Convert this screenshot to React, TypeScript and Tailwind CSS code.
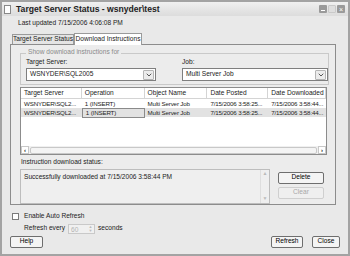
import { ChevronDown } from 'lucide-react';

const rows = [
  { server: 'WSNYDER\\SQL2...', op: '1 (INSERT)', obj: 'Multi Server Job', posted: '7/15/2006 3:58:25...', down: '7/15/2006 3:58:44...' },
  { server: 'WSNYDER\\SQL2...', op: '1 (INSERT)', obj: 'Multi Server Job', posted: '7/15/2006 3:58:25...', down: '7/15/2006 3:58:44...' },
];

const cols = [
  { label: 'Target Server', w: 'w-[61px]' },
  { label: 'Operation', w: 'w-[63px]' },
  { label: 'Object Name', w: 'w-[63px]' },
  { label: 'Date Posted', w: 'w-[61px]' },
  { label: 'Date Downloaded', w: 'w-[58px]' },
];

const Combo = ({ text, w }: { text: string; w: string }) => (
  <div className={`${w} flex h-[13px] items-center border border-[#7f7f7f] bg-white`}>
    <span className="flex-1 pl-[3px] leading-none">{text}</span>
    <div className="mr-[1px] flex h-[10px] w-[11px] items-center justify-center rounded-[1px] border border-[#b5b5b5] bg-[#ececec]">
      <ChevronDown size={8} strokeWidth={3} className="text-[#555]" />
    </div>
  </div>
);

const Button = ({ text, w, disabled }: { text: string; w: string; disabled?: boolean }) => (
  <div
    className={`${w} flex h-[12px] items-center justify-center rounded-[2px] border ${
      disabled ? 'border-[#cfcfcf] bg-[#efefef] text-[#a8a8a8]' : 'border-[#6e6e6e] bg-[#f4f4f4] text-black'
    } leading-none`}
  >
    {text}
  </div>
);

const Cell = ({ w, text, focus }: { w: string; text: string; focus?: boolean }) => (
  <div
    className={`${w} pl-[3px] text-[6.2px] leading-none tracking-[-0.15px] ${
      focus ? 'border border-[#8a8a8a] py-[1px]' : ''
    }`}
  >
    {text}
  </div>
);

const App = () => {
  return (
    <div
      className="flex h-[256px] w-[350px] flex-col overflow-hidden whitespace-nowrap border-[2px] border-[#a3a3a3] bg-[#e9e9e9] text-[6.6px] text-[#222]"
      style={{ fontFamily: '"Liberation Sans", Arial, sans-serif' }}
    >
      {/* title bar */}
      <div className="flex h-[14px] items-center bg-gradient-to-b from-[#f0f0f0] to-[#dcdcdc] pl-[2px] pr-[3px]">
        <div className="h-[9px] w-[7px] border border-[#888] bg-white" />
        <span className="ml-[5px] flex-1 text-[8.6px] font-bold leading-none text-[#222]">
          Target Server Status - wsnyder\test
        </span>
        <div className="flex gap-[1px]">
          <div className="flex h-[8px] w-[8px] items-end justify-center rounded-[1px] bg-[#9a9a9a] pb-[2px]">
            <div className="h-[1px] w-[4px] bg-white" />
          </div>
          <div className="h-[8px] w-[8px] rounded-[1px] border border-[#c9c9c9] bg-[#dedede]" />
          <div className="flex h-[8px] w-[8px] items-center justify-center rounded-[1px] bg-[#9a9a9a] text-[7px] leading-none text-white">
            ×
          </div>
        </div>
      </div>

      <div className="flex flex-1 flex-col px-[8px]">
        <div className="mt-[4px] pl-[8px] leading-none">Last updated 7/15/2006 4:06:08 PM</div>

        {/* tabs */}
        <div className="mt-[5px] flex items-end pl-[2px]">
          <div className="flex h-[10px] w-[62px] items-center justify-center border border-b-0 border-[#9a9a9a] bg-[#e4e4e4] leading-none">
            Target Server Status
          </div>
          <div className="relative top-[1px] flex h-[12px] w-[68px] items-center justify-center border border-b-0 border-[#9a9a9a] bg-white leading-none">
            Download Instructions
          </div>
        </div>

        {/* tab panel */}
        <div className="flex h-[161px] w-[326px] flex-col border border-[#8c8c8c] bg-[#ececec] px-[9px]">
          {/* group */}
          <div className="relative mt-[8px] h-[34px] w-[309px] border border-[#c9c9c9] px-[5px]">
            <span className="absolute -top-[5px] left-[5px] bg-[#ececec] px-[2px] leading-none text-[#8a8a8a]">
              Show download instructions for
            </span>
            <div className="mt-[5px] flex gap-[26px]">
              <div className="flex flex-col gap-[3px]">
                <span className="leading-none">Target Server:</span>
                <Combo text="WSNYDER\SQL2005" w="w-[130px]" />
              </div>
              <div className="flex flex-col gap-[3px]">
                <span className="leading-none">Job:</span>
                <Combo text="Multi Server Job" w="w-[146px]" />
              </div>
            </div>
          </div>

          {/* list view */}
          <div className="mt-[2px] flex h-[70px] w-[307px] flex-col border border-[#8c8c8c] bg-white">
            <div className="flex h-[11px] border-b border-[#d4d4d4]">
              {cols.map((c, i) => (
                <div
                  key={i}
                  className={`${c.w} flex items-center border-r border-[#d4d4d4] pl-[3px] leading-none`}
                >
                  {c.label}
                </div>
              ))}
            </div>
            {rows.map((r, i) => (
              <div key={i} className={`flex h-[9px] items-center ${i === 1 ? 'bg-[#e2e2e2]' : ''}`}>
                <Cell w="w-[61px]" text={r.server} />
                <Cell w="w-[63px]" text={r.op} focus={i === 1} />
                <Cell w="w-[63px]" text={r.obj} />
                <Cell w="w-[61px]" text={r.posted} />
                <Cell w="w-[58px]" text={r.down} />
              </div>
            ))}
            <div className="flex-1" />
            {/* horizontal scrollbar */}
            <div className="flex h-[8px] items-center bg-[#f0f0f0]">
              <div className="flex h-[8px] w-[8px] items-center justify-center border border-[#c8c8c8] bg-white text-[6px] font-bold leading-none">
                ‹
              </div>
              <div className="mx-[1px] h-[7px] flex-1 rounded-[2px] border border-[#c8c8c8] bg-[#f4f4f4]" />
              <div className="flex h-[8px] w-[8px] items-center justify-center border border-[#c8c8c8] bg-white text-[6px] font-bold leading-none">
                ›
              </div>
            </div>
          </div>

          <div className="mt-[4px] pl-[1px] leading-none">Instruction download status:</div>

          <div className="mt-[3px] flex items-start gap-[8px]">
            <div className="flex h-[35px] w-[250px] border border-[#bdbdbd] bg-[#efefef]">
              <div className="flex-1 pl-[3px] pt-[4px] leading-none">
                Successfully downloaded at 7/15/2006 3:58:44 PM
              </div>
              <div className="flex w-[9px] flex-col justify-between border-l border-[#dedede] text-[5px] leading-none text-[#bbb]">
                <div className="flex h-[8px] items-center justify-center">▲</div>
                <div className="flex h-[8px] items-center justify-center">▼</div>
              </div>
            </div>
            <div className="mt-[3px] flex flex-col gap-[3px]">
              <Button text="Delete" w="w-[46px]" />
              <Button text="Clear" w="w-[46px]" disabled />
            </div>
          </div>
        </div>

        {/* bottom options */}
        <div className="mt-[8px] flex items-center gap-[5px] pl-[2px]">
          <div className="h-[7px] w-[7px] border border-[#7a7a7a] bg-white" />
          <span className="leading-none">Enable Auto Refresh</span>
        </div>
        <div className="mt-[4px] flex items-center gap-[3px] pl-[14px]">
          <span className="leading-none">Refresh every</span>
          <div className="flex h-[10px] w-[27px] border border-[#c9c9c9] bg-[#f0f0f0]">
            <span className="flex-1 pl-[2px] leading-[9px] text-[#b3b3b3]">60</span>
            <div className="flex w-[7px] flex-col justify-between text-[4px] leading-none text-[#bbb]">
              <span className="text-center">▲</span>
              <span className="text-center">▼</span>
            </div>
          </div>
          <span className="leading-none">seconds</span>
        </div>

        <div className="mt-[2px] flex items-center">
          <Button text="Help" w="w-[33px]" />
          <div className="flex-1" />
          <Button text="Refresh" w="w-[32px]" />
          <div className="w-[9px]" />
          <Button text="Close" w="w-[28px]" />
        </div>
      </div>
    </div>
  );
};

export default App;
